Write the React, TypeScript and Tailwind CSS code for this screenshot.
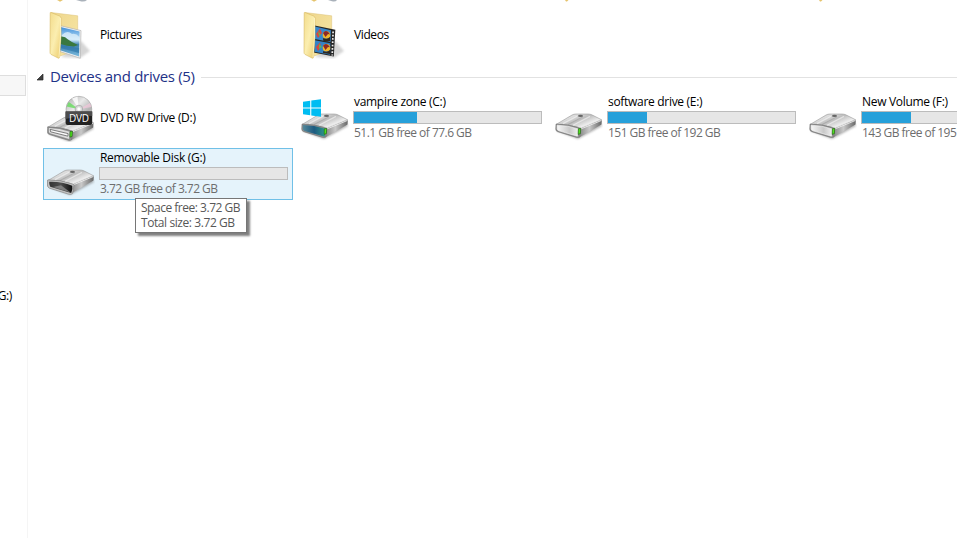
import type { ReactNode } from 'react';

interface DriveTileProps {
  name: string;
  info: string;
  used: number;
  icon: ReactNode;
  selected?: boolean;
}

function Gradients() {
  return (
    <svg className="absolute w-0 h-0" aria-hidden="true">
      <defs>
        <linearGradient id="metal" x1="0" y1="0" x2="1" y2="0.8">
          <stop offset="0" stopColor="#9a9a9a" />
          <stop offset="0.3" stopColor="#dedede" />
          <stop offset="0.5" stopColor="#bdbdbd" />
          <stop offset="0.75" stopColor="#ededed" />
          <stop offset="1" stopColor="#999" />
        </linearGradient>
        <linearGradient id="side" x1="0" y1="0" x2="1" y2="0">
          <stop offset="0" stopColor="#858585" />
          <stop offset="0.45" stopColor="#c9c9c9" />
          <stop offset="1" stopColor="#666" />
        </linearGradient>
        <linearGradient id="front" x1="0" y1="0" x2="1" y2="0">
          <stop offset="0" stopColor="#f6f6f6" />
          <stop offset="0.6" stopColor="#c9c9c9" />
          <stop offset="1" stopColor="#efefef" />
        </linearGradient>
        <linearGradient id="teal" x1="0" y1="0" x2="1" y2="0">
          <stop offset="0" stopColor="#56899a" />
          <stop offset="0.5" stopColor="#1c5a80" />
          <stop offset="1" stopColor="#2f9a8c" />
        </linearGradient>
        <linearGradient id="slot" x1="0" y1="0" x2="1" y2="0">
          <stop offset="0" stopColor="#333" />
          <stop offset="0.5" stopColor="#4f4f4f" />
          <stop offset="1" stopColor="#0e0e0e" />
        </linearGradient>
        <linearGradient id="flap" x1="0" y1="0" x2="1" y2="1">
          <stop offset="0" stopColor="#f3dc8c" />
          <stop offset="0.5" stopColor="#fbeeb0" />
          <stop offset="1" stopColor="#eccb6b" />
        </linearGradient>
        <linearGradient id="back" x1="0" y1="0" x2="1" y2="1">
          <stop offset="0" stopColor="#eed68c" />
          <stop offset="1" stopColor="#f8e7a6" />
        </linearGradient>
        <linearGradient id="sky" x1="0" y1="0" x2="0" y2="1">
          <stop offset="0" stopColor="#3f8fd9" />
          <stop offset="0.45" stopColor="#c5e4f7" />
          <stop offset="0.6" stopColor="#3c7fae" />
          <stop offset="1" stopColor="#79b9dd" />
        </linearGradient>
        <linearGradient id="disc" x1="0" y1="0" x2="1" y2="1">
          <stop offset="0" stopColor="#a9a9a9" />
          <stop offset="0.4" stopColor="#e9e9e9" />
          <stop offset="0.7" stopColor="#b4b4b4" />
          <stop offset="1" stopColor="#dadada" />
        </linearGradient>
        <filter id="soft" x="-20%" y="-20%" width="140%" height="140%">
          <feGaussianBlur stdDeviation="1.1" />
        </filter>
      </defs>
    </svg>
  );
}

// Shared body of a hard drive, the variants only change what sits in the front panel
function DriveBody({ variant = 'plain' }: { variant?: 'plain' | 'system' | 'dvd' | 'removable' }) {
  return (
    <g>
      <path d="M2 37 L23 45 L47 32 L45 28 L20 24 Z" fill="#666" opacity="0.5" filter="url(#soft)" />
      <path d="M1 30.5 L17 21 Q18.8 20 21 20 L33 20 Q35 20 36.8 20.8 L46.7 25.8 L25.5 35 Z" fill="url(#metal)" stroke="#8a8a8a" strokeWidth="0.5" />
      <path d="M25.5 34.6 L46.8 26 L46.5 30.6 L24.2 43.4 Z" fill="url(#side)" />
      <path d="M26 34.9 L46.4 26.5" stroke="#f4f4f4" strokeWidth="0.8" fill="none" />
      <path d="M1 30 Q14 30 25.8 34.2 L24.8 43 Q23.5 43.9 21.5 43.4 L2.6 37.7 Q0.6 37 0.7 35 Z" fill="#8f8f8f" stroke="#6f6f6f" strokeWidth="0.5" />
      {variant === 'plain' && <path d="M2.2 31.2 Q13 31.4 23 34.9 L22.4 42.2 L4 36.8 Q2.2 36.2 2.2 34.8 Z" fill="url(#front)" stroke="#fafafa" strokeWidth="0.6" />}
      {variant === 'system' && <path d="M1.8 31.1 Q13 31.2 24.5 34.8 L23.8 42.7 L3.6 36.9 Q1.8 36.2 1.8 34.8 Z" fill="url(#teal)" />}
      {variant === 'dvd' && (
        <g>
          <path d="M2.2 31.2 Q13 31.4 23 34.9 L22.4 42.2 L4 36.8 Q2.2 36.2 2.2 34.8 Z" fill="#dedede" />
          <path d="M3.4 32.6 L21.4 36.8 L21.2 39.4 L3.9 35 Z" fill="#fafafa" stroke="#606060" strokeWidth="0.8" />
        </g>
      )}
      {variant === 'removable' ? (
        <g>
          <path d="M0.6 30 Q14 29.6 27 34.6 L25.6 43.6 Q24 45 21.5 44.2 L2.4 38.2 Q0.3 37 0.4 35 Z" fill="#c2c2c2" stroke="#777" strokeWidth="0.5" />
          <path d="M2.2 31.8 Q14 31.2 25.3 35.7 Q26 38.5 24.2 42.9 L4 37 Q2 35.8 2.2 31.8 Z" fill="url(#slot)" />
          <path d="M6 37 L14 35.3 L23.5 42.4 Z" fill="#909090" opacity="0.75" />
        </g>
      ) : (
        <path d="M23.3 34.8 L25.7 34.4 L25.4 39.6 L23.2 40.4 Z" fill="#4ee21d" stroke="#1d5a10" strokeWidth="0.6" />
      )}
      <path d="M8 29.6 L22 22.2 M18 31.3 L35 22.4" stroke="#fff" strokeWidth="1.2" opacity="0.5" />
      <path d="M13 30.5 L28 22.8" stroke="#888" strokeWidth="1" opacity="0.35" />
      <ellipse cx="25.5" cy="21.9" rx="2.5" ry="1.1" fill="#666" />
    </g>
  );
}

function HardDriveIcon() {
  return (
    <svg viewBox="0 0 48 48" className="w-12 h-12 shrink-0">
      <DriveBody />
    </svg>
  );
}

function RemovableIcon() {
  return (
    <svg viewBox="0 0 48 48" className="w-12 h-12 shrink-0">
      <DriveBody variant="removable" />
    </svg>
  );
}

function SystemDriveIcon() {
  return (
    <svg viewBox="0 0 48 48" className="w-12 h-12 shrink-0">
      <DriveBody variant="system" />
      <path d="M2 7.8 L9.2 6.8 V13.4 H2 Z M10.3 6.6 L20 5.2 V13.4 H10.3 Z M2 14.5 H9.2 V21.2 L2 20.2 Z M10.3 14.5 H20 V22.8 L10.3 21.4 Z" fill="#00bdf2" />
    </svg>
  );
}

function DvdIcon() {
  return (
    <svg viewBox="0 0 48 48" className="w-12 h-12 shrink-0">
      <g transform="translate(-0.3 2.8)">
        <DriveBody variant="dvd" />
      </g>
      <circle cx="31.9" cy="15.2" r="12.9" fill="url(#disc)" stroke="#a0a0a0" strokeWidth="0.6" />
      <path d="M31.9 15.2 L19.6 12.6 L21.8 8 Z" fill="#5fdc55" opacity="0.75" />
      <path d="M31.9 15.2 L25 4.5 L30.5 2.4 Z" fill="#fff" opacity="0.8" />
      <path d="M31.9 15.2 L43 9 L44.5 13 Z" fill="#f4c7dc" opacity="0.7" />
      <circle cx="31.9" cy="15" r="3.8" fill="#d8d8d8" stroke="#999" strokeWidth="0.6" />
      <circle cx="31.9" cy="15" r="1.7" fill="#fff" />
      <path d="M18.6 17.5 H45.2 V29 Q45.2 31 43.2 31 H20.6 Q18.6 31 18.6 29 Z" fill="#222" />
      <path d="M18.6 17.5 H45.2 V22 Q32 21 18.6 25 Z" fill="#4d4d4d" />
      <text x="31.9" y="28.3" textAnchor="middle" fontSize="10" fill="#fff" fontFamily="Open Sans, sans-serif" textLength="20">DVD</text>
    </svg>
  );
}

function FolderIcon({ children }: { children: ReactNode }) {
  return (
    <svg viewBox="0 0 48 48" className="w-12 h-12 shrink-0">
      <path d="M14 46 L33 47 L43 40 L34 30 Z" fill="#888" opacity="0.35" filter="url(#soft)" />
      <path d="M4 1.5 L30.7 4.8 V39 L13 45 L4 40 Z" fill="url(#back)" stroke="#dcc37a" strokeWidth="0.5" />
      {children}
      <path d="M3.2 1.8 Q3.2 1.2 4 1.5 L13 5.2 Q14 5.8 14 7 V25 L12.5 46.4 Q12.2 47.7 11 47 L4 43.4 Q3 42.6 3 41.4 Z" fill="url(#flap)" stroke="#d9bb66" strokeWidth="0.6" />
      <path d="M13.5 7 V26 L12 46.4" stroke="#fff7cd" strokeWidth="0.8" fill="none" />
    </svg>
  );
}

function PicturesIcon() {
  return (
    <FolderIcon>
      <path d="M13.5 14.7 L34 19.6 L33.3 47.3 L13 40.5 Z" fill="#f3f3f3" stroke="#aaa" strokeWidth="0.6" />
      <path d="M13.5 16 L32.6 20.6 L32.1 45.4 L13 39.2 Z" fill="url(#sky)" />
      <path d="M15 24 Q20 18.5 25 23 Q29 22 32.3 26 L32.3 29 Q23 29 14.5 28 Z" fill="#e2f2fb" opacity="0.75" />
      <path d="M13.8 25.5 Q18 25 21 28.5 Q25 31.5 31 34 L27 35.4 Q20 35.5 13.5 33 Z" fill="#39783f" />
      <path d="M13.5 34 L32.2 37 L32.1 42 L13.4 37 Z" fill="#2873a7" opacity="0.6" />
    </FolderIcon>
  );
}

function VideosIcon() {
  return (
    <FolderIcon>
      <path d="M12.5 14.2 L34.3 18.8 L32.8 45.5 L12.5 41.5 Z" fill="#262626" />
      <path d="M14 15.6 L29.9 19.2 L29.5 31 L13.8 28 Z" fill="#3887cb" />
      <path d="M13.6 29.3 L29.4 32.2 L29 43.8 L13.4 40.8 Z" fill="#3482c4" />
      <path d="M15 23 L19 17.5 L21 22 L17 27 Z M15 36 L19 31.5 L20 36 L17 40 Z" fill="#d9473c" />
      <path d="M17 20 L20 24 L18 25 Z M18 33 L21 36 L18 38 Z" fill="#55b65b" />
      <circle cx="25.5" cy="24" r="3.8" fill="#edb62e" />
      <circle cx="25.5" cy="36.8" r="3.8" fill="#edb62e" />
      <path d="M22 22 Q25.5 17.5 29 23.5 L27 23 L24.5 26 Z M22 34.8 Q25.5 30.5 29 36.3 L27 36 L24.5 39 Z" fill="#8f2723" />
      <path d="M22.2 27 Q26 29 29 26 V30 Q25 31 22 29.5 Z M22.2 40 Q26 42 29 39 V43 L22 42 Z" fill="#30281f" />
      <path d="M32.1 20.5 L31.2 44.5" stroke="#f1f1f1" strokeWidth="1.7" strokeDasharray="1.7 1.6" />
    </FolderIcon>
  );
}

function FolderTile({ name, icon }: { name: string; icon: ReactNode }) {
  return (
    <div className="flex items-center w-[250px] h-[52px] pl-1 shrink-0">
      {icon}
      <span className="ml-[5px] text-xs leading-4 text-black tracking-[-0.4px]">{name}</span>
    </div>
  );
}

// Bottoms of the icons in the row that is scrolled out of view
function ClippedIcon({ badge = '' }: { badge?: string }) {
  return (
    <div className="w-[254px] shrink-0 pl-1">
      <svg viewBox="0 0 48 3" className="w-12 h-[3px]">
        <path d={badge ? 'M10 0 H16 L13 1.7 L11.5 0.8 Z' : 'M10 0 H13.5 L12 1.5 H11 Z'} fill="#e5c36c" />
        {badge && <path d={badge} fill="#a9b1ba" />}
      </svg>
    </div>
  );
}

function DriveTile({ name, info, used, icon, selected = false }: DriveTileProps) {
  return (
    <div
      className={`flex w-[250px] h-[52px] shrink-0 border pl-[3px] pt-px ${
        selected ? 'border-[#70c0e7] bg-[#e5f3fb]' : 'border-transparent'
      }`}
    >
      {icon}
      <div className="ml-1 w-[189px] shrink-0">
        <div className="pl-px h-[17px] text-xs leading-4 text-black whitespace-nowrap tracking-[-0.3px]">{name}</div>
        <div className="h-[13px] border border-[#bcbcbc] bg-[#e6e6e6]">
          <div className="h-full bg-[#26a0da]" style={{ width: `${used}px` }} />
        </div>
        <div className="pl-px mt-px text-xs leading-4 text-[#6d6d6d] whitespace-nowrap tracking-[-0.53px]">{info}</div>
      </div>
    </div>
  );
}

export default function App() {
  return (
    <div className="relative flex w-[957px] h-[538px] overflow-hidden bg-white font-['Open_Sans','Noto_Sans',sans-serif]">
      <Gradients />

      <aside className="w-7 shrink-0 border-r border-[#f5f5f5] pt-[75px]">
        <div className="w-[26px] h-[21px] border border-l-0 border-[#dedede] bg-[#f7f7f7]" />
        <div className="mt-48 w-3 flex justify-end text-xs leading-4 text-black whitespace-nowrap tracking-[-0.4px]">(G:)</div>
      </aside>

      <main className="flex-1 min-w-0 pl-[15px]">
        <div className="flex h-[9px]">
          <ClippedIcon badge="M29 0 H40 Q38 2 34.5 1.5 Z" />
          <ClippedIcon badge="M27 0 H36 Q34.5 2.2 31 1.3 Z" />
          <ClippedIcon />
          <ClippedIcon />
        </div>

        <div className="flex gap-1">
          <FolderTile name="Pictures" icon={<PicturesIcon />} />
          <FolderTile name="Videos" icon={<VideosIcon />} />
        </div>

        <div className="flex items-center h-[31px] -ml-[7px]">
          <svg viewBox="0 0 8 8" className="w-2 h-2">
            <path d="M7 1 V7 H1 Z" fill="#404040" stroke="#262626" strokeWidth="0.7" />
          </svg>
          <h2 className="ml-1.5 w-[151px] pb-0.5 text-[15px] leading-5 text-[#1e3287] whitespace-nowrap tracking-[-0.3px]">Devices and drives (5)</h2>
          <div className="flex-1 h-px mt-px bg-[#e2e2e2]" />
        </div>

        <div className="flex gap-1">
          <div className="flex items-center w-[250px] h-[52px] pl-1 shrink-0">
            <DvdIcon />
            <span className="ml-[5px] text-xs leading-4 text-black tracking-[-0.3px]">DVD RW Drive (D:)</span>
          </div>
          <DriveTile name="vampire zone (C:)" info="51.1 GB free of 77.6 GB" used={63} icon={<SystemDriveIcon />} />
          <DriveTile name="software drive (E:)" info="151 GB free of 192 GB" used={39} icon={<HardDriveIcon />} />
          <DriveTile name="New Volume (F:)" info="143 GB free of 195 GB" used={49} icon={<HardDriveIcon />} />
        </div>

        <div className="mt-1">
          <DriveTile name="Removable Disk (G:)" info="3.72 GB free of 3.72 GB" used={0} icon={<RemovableIcon />} selected />
        </div>
      </main>

      <div className="absolute left-[135px] top-[198px] w-[112px] h-[35px] border border-[#767676] bg-white pl-[5px] pt-px text-xs leading-[15px] text-[#575757] whitespace-nowrap tracking-[-0.48px] shadow-[3px_3px_2px_rgba(0,0,0,0.5)]">
        <div>Space free: 3.72 GB</div>
        <div className="tracking-[-0.42px]">Total size: 3.72 GB</div>
      </div>
    </div>
  );
}
